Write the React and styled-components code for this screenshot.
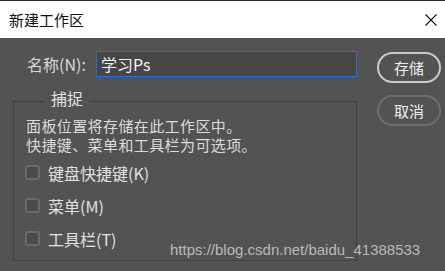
import React from 'react';
import styled, { createGlobalStyle } from 'styled-components';

const GlobalStyle = createGlobalStyle`
  html, body {
    margin: 0;
    padding: 0;
    background: #535353;
  }
  body {
    font-family: "Noto Sans CJK SC", "Liberation Sans", sans-serif;
    color: #e1e1e1;
  }
`;

const Window = styled.div`
  position: relative;
  width: 445px;
  height: 271px;
  display: flex;
  flex-direction: column;
  background: #535353;
  overflow: hidden;
`;

const TitleBar = styled.div`
  height: 37px;
  flex: none;
  border-top: 1px solid #2b2b2b;
  background: #ffffff;
  display: flex;
  align-items: center;
  justify-content: space-between;
  padding: 0 6px 0 9px;
`;

const Title = styled.span`
  font-size: 15px;
  line-height: 18px;
  color: #111;
`;

const CloseButton = styled.button`
  width: 16px;
  height: 16px;
  padding: 0;
  border: 0;
  background: none;
  display: flex;
  align-items: center;
  justify-content: center;
`;

const Body = styled.div`
  flex: 1;
  display: flex;
  gap: 20px;
  padding: 13px 4px 0 13px;
`;

const LeftColumn = styled.div`
  width: 344px;
  display: flex;
  flex-direction: column;
`;

const NameRow = styled.div`
  display: flex;
  align-items: center;
  height: 26px;
`;

const Label = styled.label`
  width: 69px;
  padding-left: 14px;
  font-size: 16px;
  line-height: 19px;
  color: #d8d8d8;
`;

const NameInput = styled.div`
  flex: 1;
  height: 26px;
  box-sizing: border-box;
  border: 1px solid #1f6fd6;
  background: #464646;
  padding-left: 4px;
  display: flex;
  align-items: center;
  font-size: 16px;
  color: #f2f2f2;
`;

const Group = styled.fieldset`
  margin: 12px 0 0;
  padding: 3px 0 5px 12px;
  border: 1px solid #404040;
  min-width: 0;
`;

const Legend = styled.legend`
  margin-left: 18px;
  padding: 0 7px 5px;
  font-size: 16px;
  line-height: 19px;
  color: #e1e1e1;
`;

const Hint = styled.p`
  margin: 0;
  font-size: 15px;
  line-height: 19px;
  letter-spacing: 0.4px;
  color: #dcdcdc;
`;

const Options = styled.div`
  margin-top: 2px;
  display: flex;
  flex-direction: column;
`;

const OptionRow = styled.label`
  height: 33px;
  display: flex;
  align-items: center;
  gap: 8px;
  margin-left: -1px;
  font-size: 16px;
  color: #e1e1e1;
`;

const Box = styled.span`
  width: 15px;
  height: 15px;
  box-sizing: border-box;
  border: 2px solid #6a6a6a;
  border-radius: 3px;
  background: #4b4b4b;
`;

const ButtonColumn = styled.div`
  display: flex;
  flex-direction: column;
  gap: 12px;
  padding-top: 1px;
`;

const PillButton = styled.button`
  width: 64px;
  height: 31px;
  box-sizing: border-box;
  border-radius: 16px;
  border: 2px solid ${(p) => (p.primary ? '#c9c9c9' : '#6d6d6d')};
  background: #535353;
  color: #efefef;
  font-family: inherit;
  font-size: 15px;
  line-height: 1;
  padding: 0;
`;

const Watermark = styled.span`
  position: absolute;
  left: 170px;
  top: 240px;
  font-family: "Liberation Sans", sans-serif;
  font-size: 15px;
  line-height: 20px;
  color: #b9b9b9;
`;

const options = ['键盘快捷键(K)', '菜单(M)', '工具栏(T)'];

export default function App() {
  return (
    <Window>
      <GlobalStyle />
      <TitleBar>
        <Title>新建工作区</Title>
        <CloseButton>
          <svg width="12" height="12" viewBox="0 0 12 12">
            <path d="M0.5 0.5 L11.5 11.5 M11.5 0.5 L0.5 11.5" stroke="#111" strokeWidth="1.1" />
          </svg>
        </CloseButton>
      </TitleBar>
      <Body>
        <LeftColumn>
          <NameRow>
            <Label>名称(N):</Label>
            <NameInput>学习Ps</NameInput>
          </NameRow>
          <Group>
            <Legend>捕捉</Legend>
            <Hint>面板位置将存储在此工作区中。</Hint>
            <Hint>快捷键、菜单和工具栏为可选项。</Hint>
            <Options>
              {options.map((o) => (
                <OptionRow key={o}>
                  <Box />
                  {o}
                </OptionRow>
              ))}
            </Options>
          </Group>
        </LeftColumn>
        <ButtonColumn>
          <PillButton primary>存储</PillButton>
          <PillButton>取消</PillButton>
        </ButtonColumn>
      </Body>
      <Watermark>https://blog.csdn.net/baidu_41388533</Watermark>
    </Window>
  );
}
